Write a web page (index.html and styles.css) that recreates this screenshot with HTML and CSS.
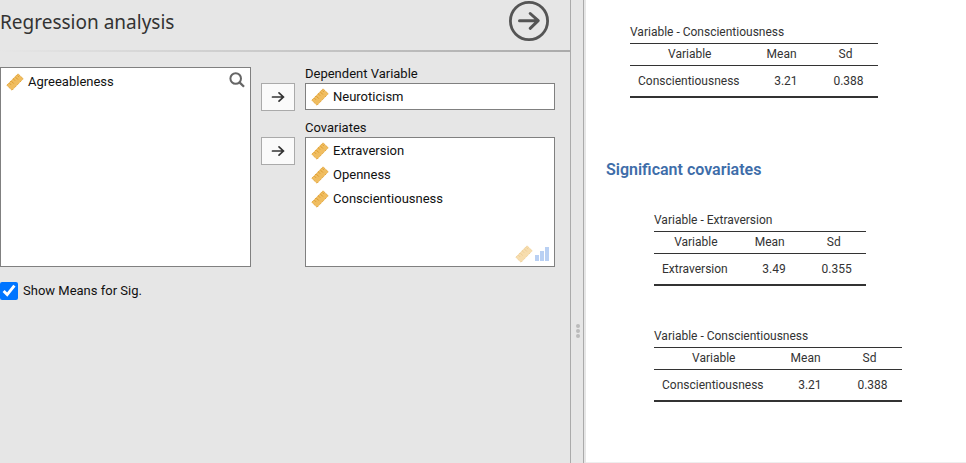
FILE: index.html
```html
<!DOCTYPE html>
<html lang="en">
<head>
<meta charset="utf-8">
<title>Regression analysis</title>
<link rel="stylesheet" href="styles.css">
</head>
<body>
<svg class="defs" aria-hidden="true">
  <symbol id="ruler" viewBox="0 0 18 18">
    <path d="M.8 12.2 12 .8 17.2 5.8 6 17.3z" fill="#f0bd60" stroke="#e0a030" stroke-width="1" stroke-dasharray="1.4 .8"/>
    <path d="M3.4 10.2l1.6 1.6M5.4 8.2l2.4 2.4M7.5 6.1l1.6 1.6M9.5 4.1l2.4 2.4M11.5 2.6l1.3 1.3" stroke="#dc9c30" stroke-width="1" fill="none"/>
  </symbol>
  <symbol id="arrow" viewBox="0 0 14 12">
    <path d="M1.5 6h11M8 1.8 12.4 6 8 10.2" fill="none" stroke="#333" stroke-width="1.7" stroke-linecap="round"/>
  </symbol>
</svg>
<div class="app">
  <main class="options">
    <header class="title-bar">
      <h1>Regression analysis</h1>
      <button class="close" type="button" aria-label="Close options">
        <svg viewBox="0 0 40 40"><circle cx="20" cy="20" r="18.6" fill="none" stroke="#555" stroke-width="2.8"/><path d="M10.5 19.7h18M21.2 12.5l8 7.2-8 7.6" fill="none" stroke="#555" stroke-width="3" stroke-linecap="round" stroke-linejoin="round"/></svg>
      </button>
    </header>
    <div class="supplier">
      <div class="list source">
        <div class="item"><svg><use href="#ruler"/></svg><span>Agreeableness</span></div>
        <button class="search" type="button" aria-label="Search">
          <svg viewBox="0 0 16 16"><circle cx="6.7" cy="6.5" r="5.3" fill="none" stroke="#666" stroke-width="2"/><path d="M10.5 10.4l4.5 4.4" stroke="#666" stroke-width="2.3"/></svg>
        </button>
      </div>
      <div class="targets">
        <h2 class="label">Dependent Variable</h2>
        <button class="move" type="button" aria-label="Move to Dependent Variable"><svg><use href="#arrow"/></svg></button>
        <div class="list"><div class="item"><svg><use href="#ruler"/></svg><span>Neuroticism</span></div></div>
        <h2 class="label next">Covariates</h2>
        <button class="move" type="button" aria-label="Move to Covariates"><svg><use href="#arrow"/></svg></button>
        <div class="list multi">
          <div class="item"><svg><use href="#ruler"/></svg><span>Extraversion</span></div>
          <div class="item"><svg><use href="#ruler"/></svg><span>Openness</span></div>
          <div class="item"><svg><use href="#ruler"/></svg><span>Conscientiousness</span></div>
          <div class="permitted">
            <svg><use href="#ruler"/></svg>
            <svg class="bars" viewBox="0 0 14 14"><path d="M0 8h4v6H0zM5 4h4v10H5zM10 0h4v14h-4z" fill="#3c7de0"/></svg>
          </div>
        </div>
      </div>
    </div>
    <label class="check"><input type="checkbox" checked><span>Show Means for Sig.</span></label>
  </main>
  <div class="splitter"><i></i><i></i><i></i></div>
  <section class="results">
    <table>
      <caption>Variable - Conscientiousness</caption>
      <thead><tr><th>Variable</th><th>Mean</th><th>Sd</th></tr></thead>
      <tbody><tr><td>Conscientiousness</td><td>3.21</td><td>0.388</td></tr></tbody>
    </table>
    <h2>Significant covariates</h2>
    <div class="group">
      <table>
        <caption>Variable - Extraversion</caption>
        <thead><tr><th>Variable</th><th>Mean</th><th>Sd</th></tr></thead>
        <tbody><tr><td>Extraversion</td><td>3.49</td><td>0.355</td></tr></tbody>
      </table>
      <table>
        <caption>Variable - Conscientiousness</caption>
        <thead><tr><th>Variable</th><th>Mean</th><th>Sd</th></tr></thead>
        <tbody><tr><td>Conscientiousness</td><td>3.21</td><td>0.388</td></tr></tbody>
      </table>
    </div>
  </section>
</div>
</body>
</html>
```
FILE: styles.css
```css
* { box-sizing: border-box; }
body {
  margin: 0;
  background: #e6e6e6;
  color: #111;
  font: 13px/16px Roboto, sans-serif;
}
h1, h2 { margin: 0; font-weight: 400; }
button { padding: 0; border: 0; background: none; font: inherit; }
svg { display: block; }
.defs { position: absolute; width: 0; height: 0; }
.app {
  display: grid;
  grid-template-columns: 571fr 15px 380fr;
  min-height: 100vh;
}

/* Options panel */
.options { border-right: 1px solid #aaa; }
.title-bar {
  display: flex;
  align-items: center;
  justify-content: space-between;
  height: 52px;
  padding: 0 21px 8px 0;
  border-bottom: 2px solid;
  border-image: linear-gradient(to right, #e6e6e6, #aaa) 1;
}
.title-bar h1 {
  padding-top: 2px;
  color: #333;
  font: 19px/28px "Noto Sans", sans-serif;
}
.close svg { width: 40px; height: 40px; }
.supplier {
  display: grid;
  grid-template-columns: 251fr 294fr;
  gap: 10px;
  padding: 15px 15px 0 0;
}
.list { border: 1px solid #808080; background: #fff; }
.source { display: flex; justify-content: space-between; align-items: flex-start; }
.item {
  display: flex;
  align-items: center;
  gap: 4px;
  height: 24px;
  padding: 1px 0 0 5px;
}
.item svg { width: 18px; height: 18px; }
.source .item { padding-top: 2px; height: 26px; }
.search { padding: 4px 5px 0 0; }
.search svg { width: 16px; height: 16px; }
.targets {
  display: grid;
  grid-template-columns: 34px 1fr;
  column-gap: 10px;
  align-items: start;
}
.label {
  grid-column: 2;
  height: 16px;
  font-size: 13px;
  line-height: 13px;
}
.next { margin-top: 11px; }
.targets .list { min-height: 27px; }
.targets .multi {
  display: flex;
  flex-direction: column;
  min-height: 130px;
}
.move {
  display: flex;
  align-items: center;
  justify-content: center;
  height: 28px;
  margin-bottom: -1px;
  border: 1px solid #aaa;
  background: #fafafa;
}
.move svg { width: 14px; height: 12px; }
.permitted {
  display: flex;
  align-items: center;
  gap: 2px;
  margin: auto 5px 3px auto;
  opacity: .5;
}
.permitted svg { width: 18px; height: 18px; }
.permitted .bars { width: 14px; height: 14px; opacity: .7; }
.check {
  display: inline-flex;
  align-items: center;
  gap: 5px;
  margin-top: 15px;
}
.check input { width: 18px; height: 18px; margin: 0; accent-color: #0075ff; }

/* Divider between the panels */
.splitter {
  display: flex;
  flex-direction: column;
  align-items: center;
  gap: 1px;
  padding-top: 324px;
  border-right: 2px solid #e6e6e6;
  box-shadow: inset -1px 0 #aaa;
}
.splitter i { width: 4px; height: 4px; border-radius: 2px; background: #bbb; }

/* Results panel */
.results {
  padding: 24px 24px 0 44px;
  border-bottom: 1px solid #eee;
  background: #fff;
  color: #333;
  font-size: 12px;
}
.results h2 {
  margin: 60px 0 30px -24px;
  color: #3e6da9;
  font-size: 16px;
  font-weight: 600;
  line-height: 24px;
}
.group {
  display: flex;
  flex-direction: column;
  align-items: flex-start;
  gap: 42px;
  padding-left: 24px;
}
table { border-collapse: separate; border-spacing: 0; }
caption { height: 19px; text-align: left; white-space: nowrap; }
th {
  height: 23px;
  padding: 0 0 2px;
  border: solid #333;
  border-width: 1px 0;
  font-weight: 400;
}
td { height: 32px; padding: 0 10px 0 8px; border-bottom: 2px solid #333; }
td:nth-child(n+2) { width: 64px; padding: 0 14px 0 0; text-align: right; }
td:nth-child(2) { padding-right: 16px; }
```
